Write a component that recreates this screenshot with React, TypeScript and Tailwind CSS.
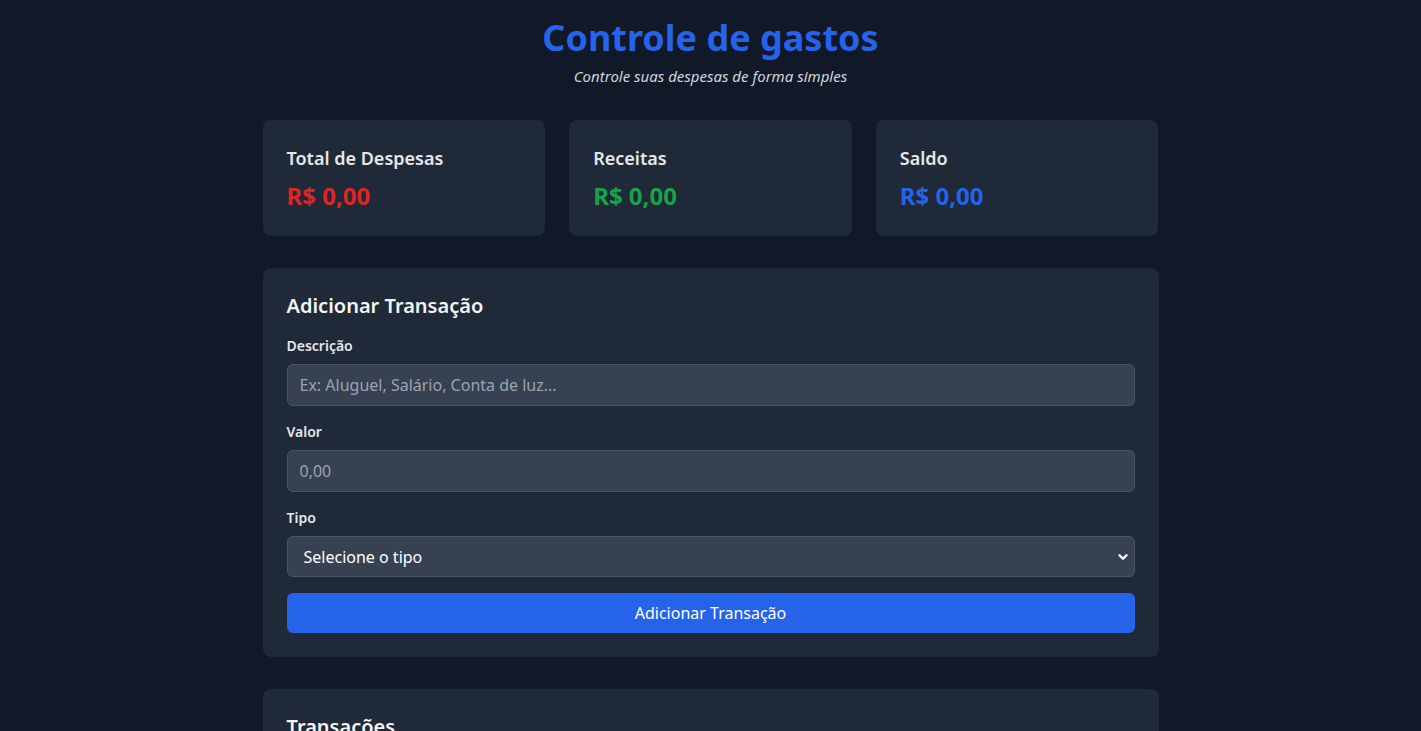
import { ChevronDown } from "lucide-react"

const summary = [
  { label: "Total de Despesas", value: "R$ 0,00", color: "text-[#dc2626]" },
  { label: "Receitas", value: "R$ 0,00", color: "text-[#16a34a]" },
  { label: "Saldo", value: "R$ 0,00", color: "text-[#2563eb]" },
]

export default function App() {
  return (
    <div className="min-h-screen bg-[#111827] px-4 font-['Noto_Sans',sans-serif] text-gray-100">
      <div className="mx-auto max-w-4xl py-4">
        {/* Header */}
        <header className="mb-8 text-center">
          <h1 className="pt-0.5 text-4xl font-bold text-[#2563eb]">Controle de gastos</h1>
          <p className="mt-1.5 text-[15px] leading-6 italic text-gray-300">
            Controle suas despesas de forma simples
          </p>
        </header>

        {/* Resumo */}
        <div className="mb-8 grid grid-cols-3 gap-6">
          {summary.map((item) => (
            <div key={item.label} className="rounded-lg bg-[#1f2937] p-6">
              <h3 className="text-lg font-semibold text-gray-200">{item.label}</h3>
              <p className={`mt-2 text-2xl font-bold ${item.color}`}>{item.value}</p>
            </div>
          ))}
        </div>

        {/* Formulário */}
        <div className="mb-8 rounded-lg bg-[#1f2937] p-6">
          <h2 className="mb-4 text-xl font-semibold text-gray-100">Adicionar Transação</h2>
          <form className="space-y-4" onSubmit={(e) => e.preventDefault()}>
            <div>
              <label className="mb-2 block text-sm font-semibold text-gray-200">Descrição</label>
              <input
                type="text"
                placeholder="Ex: Aluguel, Salário, Conta de luz..."
                className="w-full rounded-md border border-[#4b5563] bg-[#374151] px-3 py-2 text-white placeholder-[#9ca3af] outline-none"
              />
            </div>
            <div>
              <label className="mb-2 block text-sm font-semibold text-gray-200">Valor</label>
              <input
                type="text"
                placeholder="0,00"
                className="w-full rounded-md border border-[#4b5563] bg-[#374151] px-3 py-2 text-white placeholder-[#9ca3af] outline-none"
              />
            </div>
            <div>
              <label className="mb-2 block text-sm font-semibold text-gray-200">Tipo</label>
              <div className="relative">
                <select className="h-[41px] w-full appearance-none rounded-md border border-[#4b5563] bg-[#374151] pr-8 pl-4 text-white outline-none">
                  <option>Selecione o tipo</option>
                  <option>Despesa</option>
                  <option>Receita</option>
                </select>
                <ChevronDown
                  strokeWidth={4}
                  className="pointer-events-none absolute top-1/2 right-[5px] h-3.5 w-3.5 -translate-y-1/2 text-white"
                />
              </div>
            </div>
            <button
              type="submit"
              className="w-full rounded-md bg-[#2563eb] py-2 text-white"
            >
              Adicionar Transação
            </button>
          </form>
        </div>

        {/* Lista */}
        <div className="rounded-lg bg-[#1f2937] p-6">
          <h2 className="mb-4 text-xl font-semibold text-gray-100">Transações</h2>
          <p className="py-8 text-center text-gray-400">Nenhuma transação registrada</p>
        </div>
      </div>
    </div>
  )
}
